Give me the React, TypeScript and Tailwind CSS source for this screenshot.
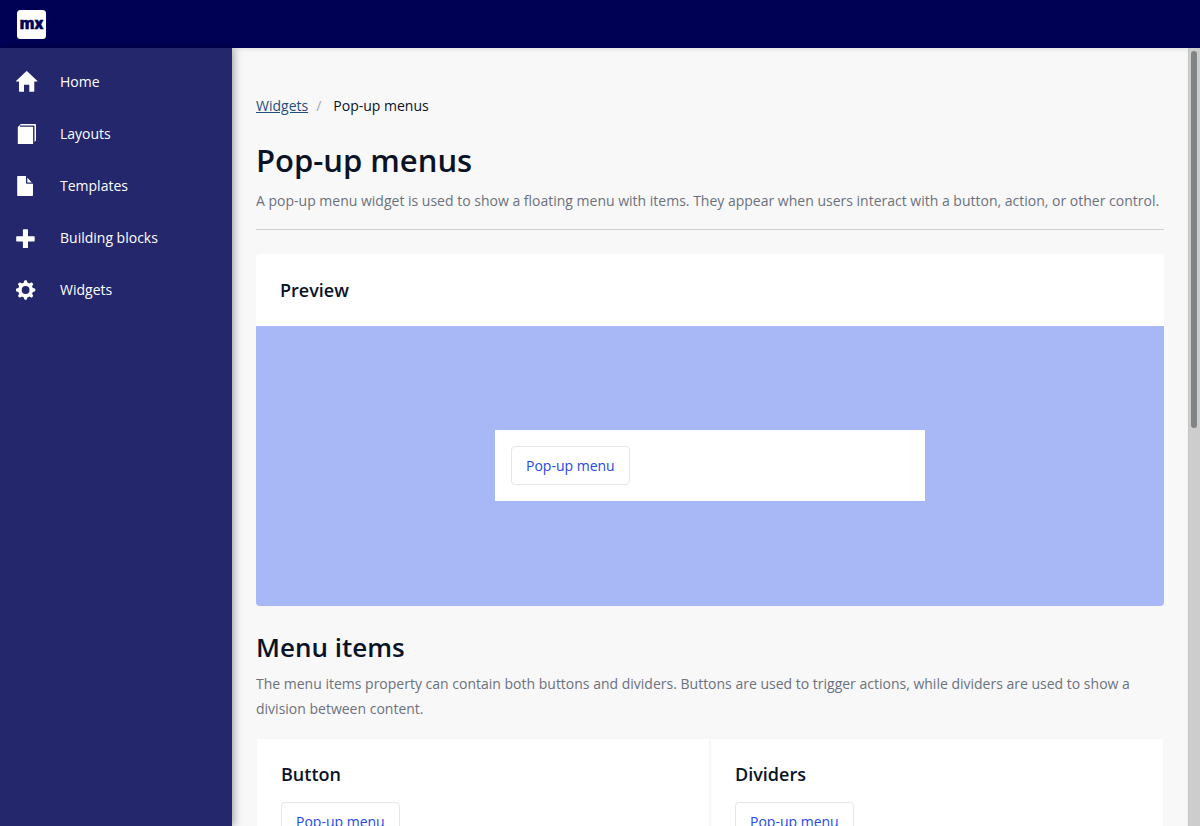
import React from "react";

const HomeIcon = () => (
  <svg viewBox="0 0 24 24" className="size-6 shrink-0" fill="currentColor" aria-hidden="true">
    <path d="M10 1.4q.7-.7 1.4 0L21.4 11q.3.5-.3.5h-2.8V21q0 .7-.7.7h-4.3v-7H8v7H3.700q-.7 0-.7-.7v-9.500H.3q-.6 0-.3-.5z" />
  </svg>
);

const LayoutsIcon = () => (
  <svg viewBox="0 0 24 24" className="size-6 shrink-0" fill="currentColor" aria-hidden="true">
    <path d="M1.800 5 4 2.900V4.700h12.500q.6 0 .6.6V22H2.400q-.6 0-.6-.6z" />
    <path d="M4 2.900 4.700 2H19q1 0 1 1v15.500L18.500 20V4.200q0-.6-.6-.6H4z" />
  </svg>
);

const FileIcon = () => (
  <svg viewBox="0 0 24 24" className="size-6 shrink-0" fill="currentColor" aria-hidden="true">
    <path d="M1.800 2H10v7q0 .8.8.8H17v11.500q0 .7-.7.7H1.800q-.6 0-.6-.7V2.700q0-.7.6-.7zM11.300 3.700 15.800 8.400h-4.500z" />
  </svg>
);

const PlusIcon = () => (
  <svg viewBox="0 0 24 24" className="size-6 shrink-0" fill="currentColor" aria-hidden="true">
    <path d="M7.600 3.300h3.700q.7 0 .7.7v6.300h6q.7 0 .7.7v3.700q0 .7-.7.7h-6v6q0 .7-.7.7H7.600q-.7 0-.7-.7v-6H.9q-.7 0-.7-.7V11q0-.7.7-.7h6V4q0-.7.7-.7z" />
  </svg>
);

const COG_ANGLES = [0, 45, 90, 135, 180, 225, 270, 315];

const CogIcon = () => (
  <svg viewBox="0 0 24 24" className="size-6 shrink-0" fill="currentColor" aria-hidden="true">
    <circle cx="9.600" cy="12" r="5.700" fill="none" stroke="currentColor" strokeWidth="3.600" />
    {COG_ANGLES.map((angle) => (
      <path key={angle} d="M7.300 5.800 8.200 2.900q.2-.6.8-.6h1.200q.6 0 .8.600l.9 2.900z" transform={`rotate(${angle} 9.6 12)`} />
    ))}
  </svg>
);

const NAV_ITEMS = [
  { label: "Home", Icon: HomeIcon },
  { label: "Layouts", Icon: LayoutsIcon },
  { label: "Templates", Icon: FileIcon },
  { label: "Building blocks", Icon: PlusIcon },
  { label: "Widgets", Icon: CogIcon },
];

const EXAMPLES = ["Button", "Dividers"];

function MenuButton() {
  return (
    <button
      type="button"
      className="rounded border border-[#e7e7e9] bg-white px-3.5 py-2 text-sm leading-[21px] text-[#264ae5]"
    >
      Pop-up menu
    </button>
  );
}

export default function App() {
  return (
    <div className="flex h-screen flex-col overflow-hidden bg-[#f8f8f8] font-['Open_Sans',sans-serif] text-sm text-[#0a1326]">
      <header className="flex h-12 shrink-0 items-center bg-[#000055] px-4">
        <a href="#home" aria-label="Mendix home">
          <svg viewBox="0 0 31 31" className="size-[31px]" aria-hidden="true">
            <rect x="1" y="1" width="29" height="29" rx="3.500" fill="#fff" />
            <text
              x="15.500"
              y="20"
              textAnchor="middle"
              className="fill-[#000055] stroke-[#000055] font-['Roboto',sans-serif] text-[17px] font-black"
              strokeWidth="0.500"
            >
              mx
            </text>
          </svg>
        </a>
      </header>
      <div className="flex min-h-0 flex-1">
        <nav className="z-10 w-[232px] shrink-0 bg-[#24276c] py-2 text-white shadow-[2px_0_8px_rgba(0,0,0,0.35)]">
          <ul>
            {NAV_ITEMS.map(({ label, Icon }) => (
              <li key={label}>
                <a href="#nav" className="flex h-[52px] items-center gap-5 px-4">
                  <Icon />
                  {label}
                </a>
              </li>
            ))}
          </ul>
        </nav>
        <main className="min-w-0 flex-1 overflow-hidden px-6 pt-12 shadow-[inset_0_4px_4px_-2px_rgba(0,0,0,0.08)]">
          <ol className="flex leading-5">
            <li>
              <a href="#widgets" className="text-[#1f4f7f] underline">
                Widgets
              </a>
            </li>
            <li className="flex">
              <span className="pr-3 pl-2 text-[#a4a7b0]">/</span>
              Pop-up menus
            </li>
          </ol>
          <h1 className="mt-6 text-[31px] leading-10 font-semibold">Pop-up menus</h1>
          <p className="mt-2 border-b border-[#ced0d3] pb-4 leading-[25px] text-[#6c717e]">
            A pop-up menu widget is used to show a floating menu with items. They appear when users interact with a
            button, action, or other control.
          </p>
          <section className="mt-6 overflow-hidden rounded bg-white">
            <h2 className="px-6 py-6 text-lg leading-6 font-semibold">Preview</h2>
            <div className="flex justify-center bg-[#a8b7f6] pt-[104px] pb-[105px]">
              <div className="w-[430px] bg-white p-4">
                <MenuButton />
              </div>
            </div>
          </section>
          <h2 className="mt-6 text-[26px] leading-[34px] font-semibold">Menu items</h2>
          <p className="mt-[7px] leading-[25px] text-[#6c717e]">
            The menu items property can contain both buttons and dividers. Buttons are used to trigger actions, while
            dividers are used to show a division between content.
          </p>
          <div className="mt-[17px] grid grid-cols-2">
            {EXAMPLES.map((title) => (
              <section key={title} className="border border-[#f8f8f8] bg-white px-6 pt-[23px] pb-6">
                <h3 className="mb-4 text-lg leading-6 font-semibold">{title}</h3>
                <MenuButton />
              </section>
            ))}
          </div>
        </main>
        <div aria-hidden="true" className="w-3 shrink-0 border-l border-[#c6c5c0] bg-[#cdcdcd] pt-[3px] pl-0.5">
          <div className="h-[377px] w-1.5 rounded-full bg-[#7f8484]" />
        </div>
      </div>
    </div>
  );
}
